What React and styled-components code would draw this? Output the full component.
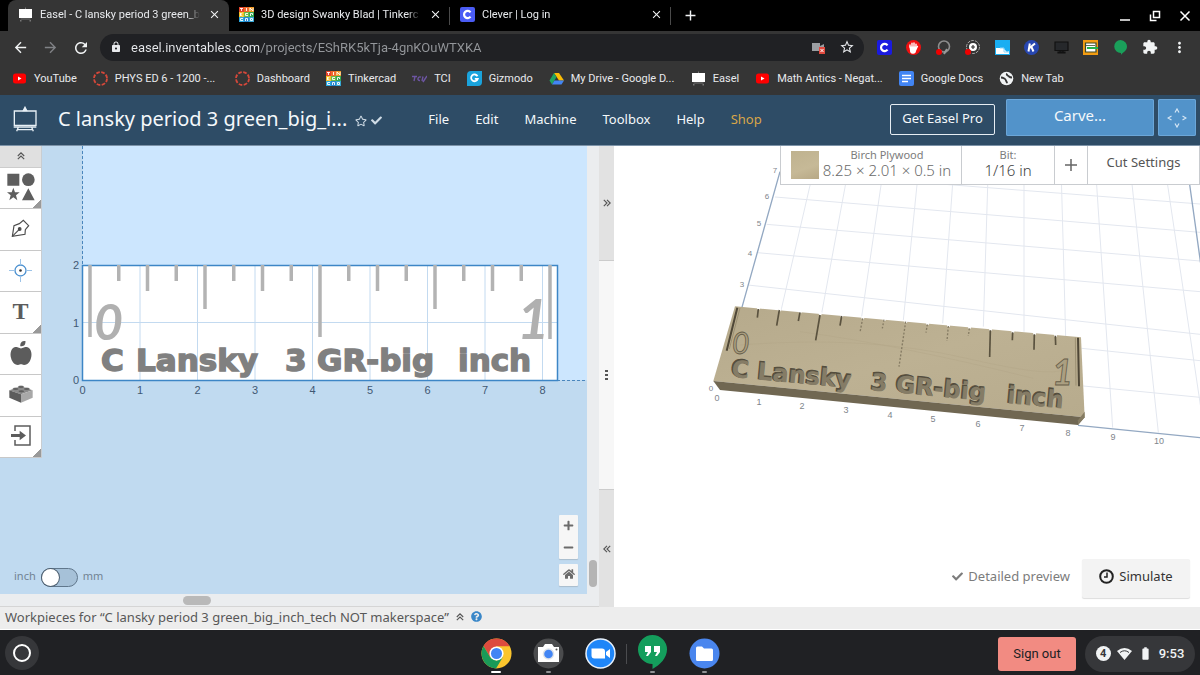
import React, { useState } from 'react';
import styled, { createGlobalStyle } from 'styled-components';
import { FaAppleAlt, FaCheck, FaHome, FaMinus, FaPlus, FaQuestionCircle, FaRegStar } from 'react-icons/fa';
import { MdAdd, MdArrowBack, MdArrowForward, MdBatteryFull, MdClose, MdExtension, MdLock, MdMoreVert, MdRefresh, MdStarBorder } from 'react-icons/md';

const GlobalStyle = createGlobalStyle`
  * { box-sizing: border-box; }
  body {
    margin: 0;
    background: #202124;
    font-family: "Noto Sans", "Open Sans", sans-serif;
    font-size: 13px;
  }
  button, input {
    font: inherit;
    color: inherit;
    border: 0;
    padding: 0;
    margin: 0;
    background: none;
  }
  button { cursor: pointer; }
  a { color: inherit; text-decoration: none; }
`;

const Page = styled.div`
  display: flex;
  flex-direction: column;
  min-height: 100vh;
`;

/* ---------- browser ---------- */

const TabStrip = styled.div`
  display: flex;
  height: 31px;
  padding-left: 8px;
  background: #000;
  color: #e8eaed;
  font: 11px Roboto, sans-serif;
`;

const Tab = styled.div`
  display: flex;
  align-items: center;
  gap: 7px;
  width: 221px;
  padding: 0 7px 2px 10px;
  border-radius: 8px 8px 0 0;
  background: ${(p) => (p.$active ? '#353535' : 'transparent')};
`;

const TabTitle = styled.span`
  flex: 1;
  white-space: nowrap;
  mask-image: linear-gradient(90deg, #000 92%, transparent);
`;

const IconButton = styled.button`
  display: grid;
  place-items: center;
  flex: none;
  width: 16px;
  height: 16px;
  color: ${(p) => (p.$dim ? '#808286' : '#f1f3f4')};
`;

const TabDivider = styled.span`
  align-self: center;
  width: 1px;
  height: 18px;
  margin-left: -1px;
  background: #4a4a4a;
`;

const NewTab = styled(IconButton)`
  align-self: center;
  margin: 0 0 2px 11px;
`;

const WindowControls = styled.div`
  display: flex;
  align-items: center;
  gap: 14px;
  margin-left: auto;
  padding-right: 7px;
`;

const Toolbar = styled.div`
  display: flex;
  align-items: center;
  height: 32px;
  padding: 0 13px 0 12px;
  background: #353535;
`;

const NavButtons = styled.div`
  display: flex;
  gap: 14px;
  margin-right: 12px;
`;

const Omnibox = styled.label`
  display: flex;
  align-items: center;
  flex: 1;
  gap: 9px;
  height: 27px;
  padding: 0 9px 0 10px;
  border-radius: 14px;
  background: #202124;
  color: #e8eaed;
`;

const Address = styled.input`
  flex: 1;
  min-width: 0;
  outline: none;
  font: 13px Roboto, sans-serif;
  color: transparent;
  background: linear-gradient(90deg, #e8eaed 128px, #94979b 128px);
  background-clip: text;
`;

const OmniActions = styled.span`
  display: flex;
  align-items: center;
  gap: 13px;
`;

const Extensions = styled.div`
  display: flex;
  justify-content: space-between;
  width: 311px;
  margin-left: 12px;
`;

const Bookmarks = styled.nav`
  display: flex;
  align-items: center;
  gap: 16px;
  height: 32px;
  padding: 0 12px 2px;
  background: #353535;
  color: #e8eaed;
  font: 11px Roboto, sans-serif;
`;

const Bookmark = styled.a`
  display: flex;
  align-items: center;
  gap: 7px;
  white-space: nowrap;
  span { min-width: ${(p) => (p.$cut ? '104px' : '0')}; }
`;

const Favicon = styled.svg`
  display: block;
  flex: none;
  width: 15px;
  height: 15px;
`;

/* ---------- easel header ---------- */

const Header = styled.header`
  display: flex;
  align-items: center;
  height: 51px;
  padding: 0 4px 3px 13px;
  border-bottom: 1px solid #7d93a8;
  background: #2e4c66;
  color: #f4f8fb;
`;

const ProjectTitle = styled.h1`
  margin: 0 8px 0 21px;
  font-size: 20px;
  font-weight: 400;
  line-height: 28px;
  white-space: nowrap;
`;

const TitleMarks = styled.div`
  display: flex;
  align-items: center;
  gap: 4px;
  padding-top: 4px;
  color: #cfdbe5;
`;

const Menu = styled.nav`
  display: flex;
  gap: 26px;
  margin-left: 46px;
`;

const MenuItem = styled.button`
  line-height: 20px;
  color: ${(p) => (p.$gold ? '#d9a648' : 'inherit')};
`;

const HeaderActions = styled.div`
  display: flex;
  align-items: center;
  gap: 4px;
  margin-left: auto;
`;

const ProButton = styled.button`
  width: 105px;
  height: 31px;
  margin: 2px 7px 0 0;
  border: 1px solid #e6edf3;
  border-radius: 2px;
  padding-bottom: 4px;
  white-space: nowrap;
`;

const CarveButton = styled.button`
  width: 148px;
  height: 37px;
  margin-bottom: 2px;
  padding-bottom: 5px;
  border-radius: 2px;
  background: #5293ca;
  box-shadow: inset 0 0 0 1px #6ba6d8;
  font-size: 15px;
`;

const JogButton = styled(CarveButton)`
  display: grid;
  place-items: center;
  width: 38px;
  padding: 0;
`;

/* ---------- workspace ---------- */

const Workspace = styled.main`
  display: grid;
  grid-template-columns: calc(50% - 1px) 15px minmax(0, 1fr);
  flex: 1;
`;

const DesignPane = styled.section`
  display: grid;
  grid-template-columns: minmax(0, 1fr) 12px;
  grid-template-rows: minmax(0, 1fr) 13px;
  background: #ebedef;
`;

const Layered = styled.div`
  display: grid;
  grid-template: minmax(0, 1fr) / minmax(0, 1fr);
  overflow: hidden;
  background: ${(p) => p.$fill};
  > * { grid-area: 1 / 1; }
`;

const Drawing = styled.svg`
  display: block;
  width: 100%;
  height: 100%;
`;

const ToolPalette = styled.div`
  align-self: start;
  justify-self: start;
  width: 42px;
  border-right: 1px solid #c9cdd1;
  background: #fff;
  color: #5c5c5c;
`;

const CollapseButton = styled.button`
  display: grid;
  place-items: center;
  width: 100%;
  height: 22px;
  padding-bottom: 2px;
  border-bottom: 1px solid #ccc;
  background: #e0e0e0;
`;

const ToolList = styled.div`
  display: grid;
  grid-auto-rows: 1fr;
  height: 290px;
`;

const Tool = styled.button`
  display: grid;
  place-items: center;
  border-bottom: 1px solid #c8c8c8;
  padding-bottom: 2px;
  background: ${(p) => (p.$more ? 'linear-gradient(135deg, transparent 50%, #999 50%) right bottom / 8px 8px no-repeat' : 'none')};
`;

const UnitSwitch = styled.label`
  display: flex;
  align-items: center;
  align-self: end;
  justify-self: start;
  gap: 5px;
  margin: 0 0 7px 14px;
  color: #728393;
  font-size: 11px;
  line-height: 18px;
  span { padding-bottom: 2px; }
`;

const Toggle = styled.input`
  appearance: none;
  display: flex;
  width: 37px;
  height: 19px;
  border: 1px solid #60778c;
  border-radius: 10px;
  background: #a6c1d8;
  &::before {
    content: '';
    width: 17px;
    height: 17px;
    border-radius: 50%;
    background: #fff;
    box-shadow: 0 0 0 1px #4d5f70;
  }
  &:checked { justify-content: flex-end; }
`;

const ZoomControls = styled.div`
  display: flex;
  flex-direction: column;
  align-self: end;
  justify-self: end;
  gap: 5px;
  margin: 0 9px 8px 0;
  color: #6b6b6b;
`;

const ZoomGroup = styled.div`
  display: grid;
  width: 19px;
  border-radius: 1px;
  background: #f6f6f6;
  box-shadow: 0 1px 1px #a9bccb;
`;

const ZoomButton = styled.button`
  display: grid;
  place-items: center;
  height: 22px;
  padding-bottom: 2px;
`;

const VScroll = styled.div`
  display: flex;
  align-items: flex-end;
  justify-content: center;
  padding: 0 1px 7px 0;
  &::after {
    content: '';
    width: 8px;
    height: 27px;
    border-radius: 4px;
    background: #b4b4b4;
  }
`;

const HScroll = styled.div`
  grid-column: 1 / -1;
  padding: 2px 0 0 183px;
  border-bottom: 1px solid #d5d5d5;
  &::after {
    content: '';
    display: block;
    width: 28px;
    height: 9px;
    border-radius: 5px;
    background: #b9b9b9;
  }
`;

const Splitter = styled.div`
  display: grid;
  grid-template-rows: 114fr 230fr 117fr;
  background: #e2e2e2;
  color: #666;
`;

const SplitPart = styled.button`
  display: grid;
  place-items: center;
  background: ${(p) => (p.$handle ? '#f7f7f7' : 'none')};
  border: solid #ccc;
  border-width: ${(p) => (p.$handle ? '1px 0' : '0')};
`;

const CutBar = styled.div`
  display: flex;
  align-self: start;
  justify-self: end;
  height: 39px;
  border: solid #c9ccd0;
  border-width: 0 1px 1px;
  background: #fff;
  color: #555;
`;

const CutCell = styled.button`
  display: flex;
  align-items: center;
  justify-content: center;
  gap: 4px;
  width: ${(p) => p.$width}px;
  border-left: ${(p) => (p.$first ? '0' : '1px solid #c9ccd0')};
  padding-bottom: ${(p) => (p.$raised ? '7px' : '0')};
  white-space: nowrap;
`;

const Swatch = styled.span`
  width: 28px;
  height: 28px;
  margin-bottom: 1px;
  background: linear-gradient(160deg, #bfb28f, #c6b997 60%, #b7a885);
`;

const CellText = styled.span`
  display: grid;
  justify-items: center;
  padding-bottom: 4px;
  font-size: 15px;
  font-weight: 300;
  line-height: 17px;
  color: ${(p) => (p.$soft ? '#6a6a6a' : '#3c3c3c')};
  small {
    font-size: 11px;
    font-weight: 400;
    line-height: 15px;
    color: #7c7c7c;
  }
`;

const PreviewActions = styled.div`
  display: flex;
  align-self: end;
  justify-self: end;
  gap: 12px;
  margin: 0 10px 9px;
`;

const PreviewToggle = styled.button`
  display: flex;
  align-items: center;
  gap: 5px;
  padding-bottom: 5px;
  color: #7c7c7c;
`;

const SimulateButton = styled.button`
  display: flex;
  align-items: center;
  justify-content: center;
  gap: 5px;
  width: 108px;
  height: 39px;
  padding-bottom: 5px;
  border-radius: 2px;
  background: #f3f3f3;
  box-shadow: 0 1px 1px #ddd;
  color: #333;
`;

const WorkpieceBar = styled.footer`
  display: flex;
  align-items: center;
  gap: 7px;
  height: 23px;
  padding: 0 5px 3px;
  border-bottom: 1px solid #fff;
  background: #ededed;
  color: #585858;
  button { display: grid; }
`;

/* ---------- shelf ---------- */

const Shelf = styled.div`
  display: grid;
  grid-template-columns: 1fr auto 1fr;
  align-items: center;
  height: 45px;
  padding: 0 5px;
  background: #202124;
`;

const Launcher = styled.button`
  display: grid;
  place-items: center;
  width: 34px;
  height: 34px;
  border-radius: 50%;
  background: #36373a;
  &::after {
    content: '';
    width: 14px;
    height: 14px;
    border: 2px solid #fff;
    border-radius: 50%;
  }
`;

const ShelfApps = styled.div`
  display: flex;
  align-items: flex-end;
  align-self: end;
  gap: 21px;
  padding-bottom: 2px;
`;

const ShelfApp = styled.button`
  display: flex;
  flex-direction: column;
  align-items: center;
  gap: 2px;
  &::after {
    content: '';
    width: ${(p) => (p.$active ? '10px' : '5px')};
    height: 2px;
    border-radius: 1px;
    background: ${(p) => (p.$active ? '#fff' : p.$running ? '#909193' : 'transparent')};
  }
`;

const ShelfDivider = styled.span`
  width: 1px;
  height: 20px;
  margin: 0 -11px 9px;
  background: #4b4c4f;
`;

const ShelfStatus = styled.div`
  display: flex;
  justify-content: flex-end;
  align-items: center;
  gap: 9px;
  padding-top: 2px;
  font: 13px Roboto, sans-serif;
`;

const SignOut = styled.button`
  width: 78px;
  height: 34px;
  border-radius: 3px;
  background: #f28b82;
  color: #202124;
`;

const Tray = styled.button`
  display: flex;
  align-items: center;
  justify-content: center;
  gap: 6px;
  width: 110px;
  height: 36px;
  border-radius: 18px;
  background: #36373a;
  color: #f1f3f4;
  font-weight: 500;
`;

const Badge = styled.span`
  width: 15px;
  height: 15px;
  border-radius: 50%;
  background: #f1f3f4;
  color: #36373a;
  font-size: 11px;
  font-weight: 700;
  line-height: 15px;
  text-align: center;
`;

/* ---------- favicons ---------- */

const EaselMark = () => (
  <Favicon viewBox="0 0 15 15">
    <path d="M1 2h13v9H1z" fill="#fff" />
    <path d="M7 .5h1V2H7zM2.5 11.5h10v1h-10zM2 13h1.5v1.5H2zM11.500 13H13v1.500h-1.500z" fill="#777" />
  </Favicon>
);

const tinkerTiles = ['#e3442b', '#ee6a2c', '#f39a25', '#f5c027', '#6dbb45', '#35a853', '#2aa7df', '#2787d0', '#35a5d4'];
// one white mark for every tile
const tinkerMarks = ['M1 1.500h3M2.500 1.500v2.500', 'M2.500 1v3', 'M1 4V1l3 3V1', 'M1.500 1v3M3.500 1L1.500 2.500L3.500 4', 'M4 1.500H1.500v2H4', 'M1.500 4V1.500h2V3', 'M4 1.500H1.500v2H4', 'M1.500 4V1.500h2V4', 'M1.500 1.500h2v2h-2z'];
const TinkerMark = () => (
  <Favicon viewBox="0 0 15 15">
    {tinkerTiles.map((fill, i) => (
      <g key={i} transform={`translate(${(i % 3) * 5} ${Math.floor(i / 3) * 5})`}>
        <rect width="5" height="5" fill={fill} />
        <path d={tinkerMarks[i]} fill="none" stroke="#fff" strokeWidth="0.900" />
      </g>
    ))}
  </Favicon>
);

const YouTubeMark = () => (
  <Favicon viewBox="0 0 15 15">
    <rect x="1" y="2.500" width="13" height="10" rx="2.500" fill="#f00" />
    <path d="M6 5.500v4l3.500-2z" fill="#fff" />
  </Favicon>
);

const CanvasMark = () => (
  <Favicon viewBox="0 0 15 15">
    <circle cx="7.500" cy="7.500" r="6.500" fill="none" stroke="#d5483a" strokeWidth="1.800" strokeDasharray="3.600 1.500" />
  </Favicon>
);

const CleverMark = ({ from = '#4a5cf5' }) => (
  <Favicon viewBox="0 0 15 15">
    <rect width="15" height="15" rx="2" fill={from} />
    <path d="M10.500 5.300A3.600 3.600 0 1 0 10.500 9.700" fill="none" stroke="#fff" strokeWidth="2.200" />
  </Favicon>
);

const TciMark = () => (
  <Favicon viewBox="0 0 15 15">
    <path d="M0 5.500h5M3 5.500L2 10M9 6.200C6 4.500 4.500 9.800 8 9.500M11 5.500l-1 4.500M15 5L11 11" fill="none" stroke="#6d55a3" strokeWidth="1.400" />
  </Favicon>
);

const GizmodoMark = () => (
  <Favicon viewBox="0 0 15 15">
    <path d="M4 0h11v11a4 4 0 0 1-4 4H0V4a4 4 0 0 1 4-4z" fill="#1aa3dc" />
    <path d="M10.500 5.200A3.400 3.400 0 1 0 10.800 7.800H7.800" fill="none" stroke="#fff" strokeWidth="1.800" />
  </Favicon>
);

const DriveMark = () => (
  <Favicon viewBox="0 0 15 15">
    <path d="M5 2h5l5 7.500h-5z" fill="#fbbc04" />
    <path d="M5 2l2.500 4L3 13.500L.5 9.500z" fill="#1fa463" />
    <path d="M5.500 9.500H15l-2.500 4H3z" fill="#4285f4" />
  </Favicon>
);

const DocsMark = () => (
  <Favicon viewBox="0 0 15 15">
    <rect width="15" height="15" rx="2" fill="#4285f4" />
    <path d="M3 4.500h9M3 7.500h9M3 10.500h6" stroke="#fff" strokeWidth="1.500" />
  </Favicon>
);

const GlobeMark = () => (
  <Favicon viewBox="0 0 15 15">
    <circle cx="7.500" cy="7.500" r="6.800" fill="#f1f3f4" />
    <path d="M2 6.500c2 0 3 1 4 1.500s1 3 2.500 4M8 2.500c-1 2 1 2 2 3s1.500 1 3 1" fill="none" stroke="#353535" strokeWidth="1.800" />
  </Favicon>
);

const tabs = [
  { title: 'Easel - C lansky period 3 green_b', icon: <EaselMark />, active: true },
  { title: '3D design Swanky Blad | Tinkerc', icon: <TinkerMark /> },
  { title: 'Clever | Log in', icon: <CleverMark /> },
];

const bookmarks = [
  { label: 'YouTube', icon: <YouTubeMark /> },
  { label: 'PHYS ED 6 - 1200 -...', icon: <CanvasMark />, cut: true },
  { label: 'Dashboard', icon: <CanvasMark /> },
  { label: 'Tinkercad', icon: <TinkerMark /> },
  { label: 'TCI', icon: <TciMark /> },
  { label: 'Gizmodo', icon: <GizmodoMark /> },
  { label: 'My Drive - Google D...', icon: <DriveMark />, cut: true },
  { label: 'Easel', icon: <EaselMark /> },
  { label: 'Math Antics - Negat...', icon: <YouTubeMark />, cut: true },
  { label: 'Google Docs', icon: <DocsMark /> },
  { label: 'New Tab', icon: <GlobeMark /> },
];

const extensions = [
  { name: 'Clever', icon: <CleverMark from="#1a1ae0" /> },
  {
    name: 'Blocker',
    icon: (
      <Favicon viewBox="0 0 15 15">
        <circle cx="7.500" cy="7.500" r="7.500" fill="#f01010" />
        <path d="M4 7V5M6 7V3.200M8 7V3M10 8V4.200" stroke="#fff" strokeWidth="1.400" strokeLinecap="round" />
        <path d="M3.400 6.500h7.200l1-1 .6.800L10 11a3 3 0 0 1-6-.5z" fill="#fff" />
      </Favicon>
    ),
  },
  {
    name: 'Recorder',
    icon: (
      <Favicon viewBox="0 0 15 15">
        <circle cx="8" cy="6.500" r="5.500" fill="none" stroke="#8d8d8d" strokeWidth="1.600" />
        <path d="M8 14l3-5" stroke="#999" strokeWidth="2" />
        <circle cx="3" cy="12" r="3" fill="#f00000" />
      </Favicon>
    ),
  },
  {
    name: 'Target',
    icon: (
      <Favicon viewBox="0 0 15 15">
        <circle cx="8" cy="7" r="6.500" fill="none" stroke="#aaa" strokeWidth="1" strokeDasharray="3 1" />
        <circle cx="8" cy="7" r="4" fill="#fff" />
        <path d="M8 5v4M6 7h4" stroke="#353535" strokeWidth="1.200" />
        <circle cx="3" cy="12" r="3" fill="#f00000" />
      </Favicon>
    ),
  },
  {
    name: 'Window',
    icon: (
      <Favicon viewBox="0 0 15 15">
        <path d="M0 0h15v15H0z" fill="#19aef2" />
        <path d="M1 8h7l4 4 2-1v3H1z" fill="#fff" />
        <path d="M5 8h4v4h5" fill="none" stroke="#8fd5f7" />
      </Favicon>
    ),
  },
  {
    name: 'Kami',
    icon: (
      <Favicon viewBox="0 0 15 15">
        <circle cx="7.500" cy="7.500" r="7.500" fill="#2746b0" />
        <path d="M5.800 3.500L4.500 11.500M11 3.500L5.500 8M7.200 6.500L9.500 11.500" stroke="#fff" strokeWidth="2" />
      </Favicon>
    ),
  },
  {
    name: 'Display',
    icon: (
      <Favicon viewBox="0 0 15 15">
        <path d="M1 2h13v8.500H1zM6 10.500h3V12H6zM4 12h7v1H4z" fill="#26282b" stroke="#111" strokeWidth="1.200" />
      </Favicon>
    ),
  },
  {
    name: 'Books',
    icon: (
      <Favicon viewBox="0 0 15 15">
        <path d="M0 0h15v15H0z" fill="#f39c12" />
        <path d="M2.500 3h10.500v9H2.500z" fill="#fff" stroke="#3d4a2a" strokeWidth="1.200" />
        <path d="M3 5.500h9" stroke="#3d4a2a" strokeWidth="0.800" />
        <path d="M4 8h11" stroke="#23b34a" strokeWidth="2" />
      </Favicon>
    ),
  },
  {
    name: 'Hangouts',
    icon: (
      <Favicon viewBox="0 0 15 15">
        <path d="M7.500 0a6.500 6.500 0 0 1 6.300 8C13 11.500 9 13 8 15v-2A6.500 6.500 0 0 1 7.500 0z" fill="#1a9f5a" />
      </Favicon>
    ),
  },
  { name: 'Extensions', icon: <MdExtension size={16} /> },
  { name: 'More', icon: <MdMoreVert size={17} /> },
];

/* ---------- tool icons ---------- */

const chevrons = {
  up: 'M1 5L5 1L9 5M1 9L5 5L9 9',
  left: 'M5 1L1 5L5 9M9 1L5 5L9 9',
  right: 'M5 1L9 5L5 9M1 1L5 5L1 9',
};
const Chevrons = ({ to }) => (
  <svg width="8" height="8" viewBox="0 0 10 10" fill="none" stroke="#555" strokeWidth="1.400">
    <path d={chevrons[to]} />
  </svg>
);

const ShapesIcon = () => (
  <svg width="28" height="28" viewBox="0 0 84 84" fill="#5e5e5e">
    <path d="M1 2h36v36H1zM64 46l19 36H45z" />
    <circle cx="64" cy="20" r="19" />
    <path d="M19 44l5 14h14L27 67l4 15-12-9-12 9 4-15L0 58h14z" />
  </svg>
);

const PenIcon = () => (
  <svg width="19" height="19" viewBox="0 0 57 57" fill="none" stroke="#4c4c4c" strokeWidth="3.500">
    <path d="M4 52L9 20L25 14L37 4L53 20L43 32L42 46z" />
    <path d="M4 52L24 32" />
    <circle cx="26" cy="30" r="4" fill="#4c4c4c" />
  </svg>
);

const DrillIcon = () => (
  <svg width="23" height="23" viewBox="0 0 23 23" fill="none" stroke="#4a90d0">
    <circle cx="11.500" cy="11.500" r="5.500" strokeWidth="1.300" />
    <path d="M11.500 0v6M11.500 17v6M0 11.500h6M17 11.500h6" stroke="#9cc3e8" />
    <circle cx="11.500" cy="11.500" r="1.300" fill="#333" stroke="none" />
  </svg>
);

const Letter = styled.span`
  font: 700 24px "Liberation Serif", serif;
`;

const BrickIcon = () => (
  <svg width="24" height="18" viewBox="0 0 72 54">
    <path d="M1 16L36 4L71 16L36 28z" fill="#8a8a8a" />
    <path d="M1 16L36 28V53L1 38z" fill="#5c5c5c" />
    <path d="M71 16L36 28V53L71 38z" fill="#a8a8a8" />
    <g fill="#5e5e5e" stroke="#a0a0a0" strokeWidth="1">
      <ellipse cx="36" cy="6" rx="9" ry="4" />
      <ellipse cx="20" cy="12" rx="9" ry="4" />
      <ellipse cx="53" cy="12" rx="9" ry="4" />
      <ellipse cx="37" cy="19" rx="9" ry="4" />
    </g>
  </svg>
);

const ImportIcon = () => (
  <svg width="20" height="21" viewBox="0 0 60 63">
    <path d="M12 18V3H57V60H12V45" fill="none" stroke="#5c5c5c" strokeWidth="4.500" />
    <path d="M0 27h26V17l19 14.500L26 46V36H0z" fill="#5c5c5c" />
  </svg>
);

const tools = [
  { name: 'Shapes', icon: <ShapesIcon />, more: true },
  { name: 'Pen', icon: <PenIcon /> },
  { name: 'Drill', icon: <DrillIcon /> },
  { name: 'Text', icon: <Letter>T</Letter>, more: true },
  { name: 'Icons', icon: <FaAppleAlt size={24} /> },
  { name: 'Apps', icon: <BrickIcon /> },
  { name: 'Import', icon: <ImportIcon />, more: true },
];

/* ---------- drawings ---------- */

// bottom end of each ruler mark
const marks = [191, 135, 145, 135, 163, 135, 145, 135, 191, 135, 145, 135, 163, 135, 145, 135, 193];
const UNIT = 57.5;

const RulerText = styled.text`
  font: 700 ${(p) => p.$size}px "DejaVu Sans", sans-serif;
`;

const RulerDigit = styled.text`
  font: italic ${(p) => p.$weight} ${(p) => p.$size}px Lato, sans-serif;
`;

const AxisText = styled.text`
  font: ${(p) => p.$size}px "Liberation Sans", Arial, sans-serif;
  text-anchor: ${(p) => p.$anchor || 'middle'};
`;

// the words of the ruler name, each at its own x
const rulerWords = [['C', 101, 0], ['Lansky', 136, 26], ['3', 285, 140], ['GR-big', 317, 165], ['inch', 458, 277]];

const FlatRuler = () => (
  <Drawing>
    <path d="M83 0H4000V234H83z" fill="#cce6fe" />
    <path d="M83 119H557V234H83z" fill="#fff" />
    {[1, 2, 3, 4, 5, 6, 7, 8].map((n) => (
      <path key={n} d={`M${82.5 + n * UNIT} 120V234`} stroke="#c3daf0" />
    ))}
    <path d="M83 176.500H557" stroke="#c3daf0" />
    <path d="M82.500 0V119M557 234.500H4000" fill="none" stroke="#4a86bd" strokeDasharray="3 2" />
    <path d="M82.500 119.500H557.500V234.500H82.500z" fill="none" stroke="#3d86c6" strokeWidth="1.500" />
    {marks.map((end, i) => (
      <path key={i} d={`M${90 + i * 28.75} 119V${end}`} stroke="#b3b3b3" strokeWidth="3.500" />
    ))}
    <g fill="#b0b0b0">
      <RulerDigit $size={50} $weight={700} x="94" y="194">0</RulerDigit>
      <RulerDigit $size={56} $weight={700} x="517" y="193">1</RulerDigit>
    </g>
    <RulerText $size={31} y="225" fill="#808080" stroke="#808080" strokeWidth="1.500">
      {rulerWords.map(([word, x]) => <tspan key={word} x={x}>{`${word} `}</tspan>)}
    </RulerText>
    <g fill="#3f5873">
      {[0, 1, 2].map((n) => (
        <AxisText key={n} $size={11} $anchor="end" x="79" y={238 - n * UNIT}>{n}</AxisText>
      ))}
      {[0, 1, 2, 3, 4, 5, 6, 7, 8].map((n) => (
        <AxisText key={n} $size={11} x={82.5 + n * UNIT} y="248">{n}</AxisText>
      ))}
    </g>
  </Drawing>
);

const bedLines = [
  'M335 100L243 497', 'M440 100L365 505', 'M552 60L485 515', 'M657 60L610 525', 'M762 60L728 535', 'M865 60L850 545',
  'M972 60L972 560', 'M1083 60L1097 575', 'M1186 60L1238 848', 'M1290 60L1375 862', 'M1394 60L1516 880',
  'M240 80L1500 177', 'M225 156L1500 262', 'M200 238L1500 348', 'M172 323L1500 440', 'M143 420L1500 568',
  'M1145 610L1500 647', 'M1150 723L1500 757',
];

const grooves = [
  'M175 492L172 518', 'M238 495L230 542', 'M300 502L295 528', 'M360 510L347 586', 'M425 513L420 542',
  'M871 556L869 636', 'M938 562L937 586', 'M1003 568L1002 614', 'M1066 572L1067 600',
];
const faintGrooves = ['M488 520L480 562', 'M552 524L547 550', 'M617 530L597 665', 'M682 538L678 563', 'M745 543L741 588', 'M808 550L805 573'];
const notches = [[175, 489], [238, 494], [300, 500], [360, 506], [425, 512], [488, 518], [552, 523], [617, 529], [682, 535], [745, 541], [808, 546], [871, 552], [938, 559], [1003, 565], [1066, 571]];

const bedNumbers = [[717, 401], [759, 405], [802, 409], [846, 413], [890, 418], [933, 422], [978, 427], [1022, 431], [1068, 436], [1113, 440], [1159, 444]];
const sideNumbers = [[3, 742, 287], [4, 750, 256], [5, 759, 226], [6, 767, 199], [7, 775, 173], [0, 711, 391]];

const SolidRuler = () => (
  <Drawing>
    <defs>
      <linearGradient id="wood" x1="0" x2="1" y1="0" y2="1">
        <stop offset="0" stopColor="#b6aa8c" />
        <stop offset="0.5" stopColor="#bdb193" />
        <stop offset="1" stopColor="#b7ab8d" />
      </linearGradient>
    </defs>
    <g transform="translate(86 -1) scale(0.333333)" fill="none">
      <g stroke="#e3e7ef" strokeWidth="3">
        {bedLines.map((d) => <path key={d} d={d} />)}
      </g>
      <path d="M240 80L125 490M1465 90L1511 420M1134 841L1520 880" stroke="#93a8c2" strokeWidth="4" />
      <path d="M105 484L1143 577L1154 817L40 708z" fill="url(#wood)" />
      <path d="M40 708L1154 817L1134 840L60 735z" fill="#706752" />
      <path d="M1154 800V817L1134 840V826z" fill="#857b62" />
      <path d="M120 600Q500 570 800 640T1100 660M300 560Q600 600 1000 700" stroke="#b0a486" strokeWidth="3" opacity="0.400" />
      {notches.map(([x, y]) => <path key={x} d={`M${x - 4} ${y - 4}h10l-2 9h-7z`} fill="#fff" />)}
      <g stroke="#5a523f" strokeWidth="5">
        {grooves.map((d) => <path key={d} d={d} />)}
      </g>
      <g stroke="#857b63" strokeWidth="4" strokeDasharray="6 5">
        {faintGrooves.map((d) => <path key={d} d={d} />)}
      </g>
      <path d="M112 488L80 617M1134 578L1137 724" stroke="#4f4737" strokeWidth="6" />
      <path d="M120 489L88 612M1126 578L1128 722" stroke="#9c9072" strokeWidth="3" />
    </g>
    <g transform="translate(116 230) rotate(5.400)">
      <RulerText $size={24} y="0" fill="#544d3d" stroke="#544d3d">
        {rulerWords.map(([word, , x]) => <tspan key={word} x={x}>{`${word} `}</tspan>)}
      </RulerText>
      <RulerText $size={24} y="1" fill="#857c66" aria-hidden="true">
        {rulerWords.map(([word, , x]) => <tspan key={word} x={x + 1}>{`${word} `}</tspan>)}
      </RulerText>
    </g>
    <g fill="#ab9f81" stroke="#665d49" strokeWidth="0.800">
      <RulerDigit $size={30} $weight={400} x="118" y="208">0</RulerDigit>
      <RulerDigit $size={36} $weight={700} x="438" y="239">1</RulerDigit>
    </g>
    <g fill="#80858c" transform="translate(-614 -146)">
      {bedNumbers.map(([x, y], n) => <AxisText key={n} $size={9} x={x} y={y}>{n}</AxisText>)}
      {sideNumbers.map(([n, x, y]) => <AxisText key={n} $size={8} x={x} y={y}>{n}</AxisText>)}
    </g>
  </Drawing>
);

const EaselLogo = () => (
  <svg width="24" height="26" viewBox="0 0 72 78" fill="none" stroke="#e8f0f6" strokeWidth="4">
    <path d="M4 15H69V58H4zM2 63H70M16 64L11 76M56 64L61 76M13 71H59" />
    <path d="M31 14L36 4L41 14z" fill="#e8f0f6" />
  </svg>
);

const ChromeApp = () => (
  <svg width="31" height="31" viewBox="0 0 32 32">
    <circle cx="16" cy="16" r="15.500" fill="#fbc52d" />
    <path d="M2.600 8.300A15.500 15.500 0 0 1 29.500 8.500H16L9.500 19.800z" fill="#dd4b3e" />
    <path d="M2.600 8.300L9.500 19.800L16 23.500L22.500 19.800L15.500 31.500A15.500 15.500 0 0 1 2.600 8.300z" fill="#1a9a58" />
    <circle cx="16" cy="16" r="7.300" fill="#fff" />
    <circle cx="16" cy="16" r="5.700" fill="#4285f4" />
  </svg>
);

const CameraApp = () => (
  <svg width="31" height="31" viewBox="0 0 31 31">
    <circle cx="15.500" cy="15.500" r="15" fill="#4b4c4e" />
    <path d="M5 9h5l2-3h7l2 3h5v15H5z" fill="#fff" />
    <circle cx="15.500" cy="16" r="5.800" fill="#dfe3e8" />
    <circle cx="15.500" cy="16" r="4.300" fill="#4285f4" />
    <circle cx="23.500" cy="11.500" r="1" fill="#555" />
  </svg>
);

const ZoomApp = () => (
  <svg width="31" height="31" viewBox="0 0 31 31">
    <circle cx="15.500" cy="15.500" r="14.500" fill="#1f86f8" stroke="#e8f1fb" strokeWidth="1.500" />
    <path d="M6.500 10.500H17a3 3 0 0 1 3 3v7H9.500a3 3 0 0 1-3-3zM21 14l4-3v9l-4-3z" fill="#fff" />
  </svg>
);

const HangoutsApp = () => (
  <svg width="31" height="34" viewBox="0 0 31 34">
    <path d="M15.500 0a14.500 14.500 0 0 1 14.500 14.500C30 23 23 30 15.500 34v-5A14.500 14.500 0 0 1 15.500 0z" fill="#149e5c" />
    <path d="M8 11h6v6l-3 4H9l2-4H8zM17 11h6v6l-3 4h-2l2-4h-3z" fill="#fff" />
  </svg>
);

const FilesApp = () => (
  <svg width="31" height="31" viewBox="0 0 31 31">
    <circle cx="15.500" cy="15.500" r="15" fill="#4a86ee" />
    <path d="M7 10a1.500 1.500 0 0 1 1.500-1.500H13l2 2h7.500A1.500 1.500 0 0 1 24 12v9.500a1.500 1.500 0 0 1-1.500 1.500h-14A1.500 1.500 0 0 1 7 21.500z" fill="#fff" />
  </svg>
);

function App() {
  const [metric, setMetric] = useState(false);
  const [url, setUrl] = useState('easel.inventables.com/projects/EShRK5kTja-4gnKOuWTXKA');

  return (
    <Page>
      <GlobalStyle />
      <TabStrip>
        {tabs.map((tab, i) => (
          <React.Fragment key={tab.title}>
            <Tab $active={tab.active}>
              {tab.icon}
              <TabTitle>{tab.title}</TabTitle>
              <IconButton aria-label="Close tab"><MdClose size={13} /></IconButton>
            </Tab>
            {i > 0 && <TabDivider />}
          </React.Fragment>
        ))}
        <NewTab aria-label="New tab"><MdAdd size={17} /></NewTab>
        <WindowControls>
          <IconButton aria-label="Minimize">
            <svg width="12" height="12" stroke="#fff" strokeWidth="1.500"><path d="M1 10h10" /></svg>
          </IconButton>
          <IconButton aria-label="Restore">
            <svg width="12" height="12" fill="none" stroke="#fff" strokeWidth="1.500"><path d="M4.500 1.500h6v6h-6zM1.500 4.500v6h6" /></svg>
          </IconButton>
          <IconButton aria-label="Close window">
            <svg width="12" height="12" stroke="#fff" strokeWidth="1.500"><path d="M1.500 1.500l9 9M10.500 1.500l-9 9" /></svg>
          </IconButton>
        </WindowControls>
      </TabStrip>

      <Toolbar>
        <NavButtons>
          <IconButton aria-label="Back"><MdArrowBack size={17} /></IconButton>
          <IconButton aria-label="Forward" $dim><MdArrowForward size={17} /></IconButton>
          <IconButton aria-label="Reload"><MdRefresh size={18} /></IconButton>
        </NavButtons>
        <Omnibox>
          <MdLock size={12} />
          <Address aria-label="Address" value={url} onChange={(e) => setUrl(e.target.value)} />
          <OmniActions>
            <Favicon viewBox="0 0 15 15">
              <path d="M1 3h8v3l4-2v7H1z" fill="#9b9ea2" />
              <path d="M8 7h6v7H8z" fill="#e04a3f" />
              <path d="M9.500 9l3 3M12.500 9l-3 3" stroke="#fff" />
            </Favicon>
            <MdStarBorder size={16} />
          </OmniActions>
        </Omnibox>
        <Extensions>
          {extensions.map((ext) => (
            <IconButton key={ext.name} aria-label={ext.name}>{ext.icon}</IconButton>
          ))}
        </Extensions>
      </Toolbar>

      <Bookmarks>
        {bookmarks.map((b) => (
          <Bookmark key={b.label} href="#" $cut={b.cut}>
            {b.icon}
            <span>{b.label}</span>
          </Bookmark>
        ))}
      </Bookmarks>

      <Header>
        <EaselLogo />
        <ProjectTitle>C lansky period 3 green_big_i...</ProjectTitle>
        <TitleMarks>
          <FaRegStar size={12} />
          <FaCheck size={11} />
        </TitleMarks>
        <Menu>
          {['File', 'Edit', 'Machine', 'Toolbox', 'Help', 'Shop'].map((item) => (
            <MenuItem key={item} $gold={item === 'Shop'}>{item}</MenuItem>
          ))}
        </Menu>
        <HeaderActions>
          <ProButton>Get Easel Pro</ProButton>
          <CarveButton>Carve...</CarveButton>
          <JogButton aria-label="Jog machine">
            <svg width="20" height="20" fill="none" stroke="#d5e6f5" strokeWidth="1.200">
              <path d="M8 4.500L10 1L12 4.500M8 15.500L10 19L12 15.500M4.500 8L1 10L4.500 12M15.500 8L19 10L15.500 12" />
            </svg>
          </JogButton>
        </HeaderActions>
      </Header>

      <Workspace>
        <DesignPane>
          <Layered $fill="#c0daf0">
            <FlatRuler />
            <ToolPalette>
              <CollapseButton aria-label="Collapse tools"><Chevrons to="up" /></CollapseButton>
              <ToolList>
                {tools.map((tool) => (
                  <Tool key={tool.name} aria-label={tool.name} $more={tool.more}>{tool.icon}</Tool>
                ))}
              </ToolList>
            </ToolPalette>
            <UnitSwitch>
              <span>inch</span>
              <Toggle type="checkbox" checked={metric} onChange={() => setMetric(!metric)} />
              <span>mm</span>
            </UnitSwitch>
            <ZoomControls>
              <ZoomGroup>
                <ZoomButton aria-label="Zoom in"><FaPlus size={11} /></ZoomButton>
                <ZoomButton aria-label="Zoom out"><FaMinus size={11} /></ZoomButton>
              </ZoomGroup>
              <ZoomGroup>
                <ZoomButton aria-label="Home"><FaHome size={12} /></ZoomButton>
              </ZoomGroup>
            </ZoomControls>
          </Layered>
          <VScroll />
          <HScroll />
        </DesignPane>

        <Splitter>
          <SplitPart aria-label="Expand design"><Chevrons to="right" /></SplitPart>
          <SplitPart aria-label="Resize" $handle>
            <svg width="4" height="12" fill="#555">
              <path d="M0 1h3v2H0zM0 5h3v2H0zM0 9h3v2H0z" />
            </svg>
          </SplitPart>
          <SplitPart aria-label="Expand preview"><Chevrons to="left" /></SplitPart>
        </Splitter>

        <Layered $fill="#fff">
          <SolidRuler />
          <CutBar>
            <CutCell $width={180} $first>
              <Swatch />
              <CellText $soft>
                <small>Birch Plywood</small>
                8.25 × 2.01 × 0.5 in
              </CellText>
            </CutCell>
            <CutCell $width={93}>
              <CellText>
                <small>Bit:</small>
                1/16 in
              </CellText>
            </CutCell>
            <CutCell $width={33} aria-label="Add bit">
              <svg width="12" height="12" stroke="#666" strokeWidth="1.500"><path d="M6 0v12M0 6h12" /></svg>
            </CutCell>
            <CutCell $width={112} $raised>Cut Settings</CutCell>
          </CutBar>
          <PreviewActions>
            <PreviewToggle><FaCheck size={11} />Detailed preview</PreviewToggle>
            <SimulateButton>
              <svg width="15" height="15" fill="none" stroke="#222" strokeWidth="2">
                <circle cx="7.500" cy="7.500" r="6.300" />
                <path d="M8 3.500v4.500H5" strokeWidth="1.500" />
              </svg>
              Simulate
            </SimulateButton>
          </PreviewActions>
        </Layered>
      </Workspace>

      <WorkpieceBar>
        <span>Workpieces for “C lansky period 3 green_big_inch_tech NOT makerspace”</span>
        <button aria-label="Show workpieces"><Chevrons to="up" /></button>
        <button aria-label="Help"><FaQuestionCircle size={11} color="#3a87c8" /></button>
      </WorkpieceBar>

      <Shelf>
        <Launcher aria-label="Launcher" />
        <ShelfApps>
          <ShelfApp aria-label="Chrome" $active><ChromeApp /></ShelfApp>
          <ShelfApp aria-label="Camera" $running><CameraApp /></ShelfApp>
          <ShelfApp aria-label="Zoom"><ZoomApp /></ShelfApp>
          <ShelfDivider />
          <ShelfApp aria-label="Hangouts" $running><HangoutsApp /></ShelfApp>
          <ShelfApp aria-label="Files" $running><FilesApp /></ShelfApp>
        </ShelfApps>
        <ShelfStatus>
          <SignOut>Sign out</SignOut>
          <Tray>
            <Badge>4</Badge>
            <svg width="15" height="13" fill="none">
              <path d="M0 4Q7.500 -2 15 4L7.500 13z" fill="#f1f3f4" />
              <path d="M3 5.500Q7.500 2 12 5.500" stroke="#36373a" />
            </svg>
            <MdBatteryFull size={15} />
            <span>9:53</span>
          </Tray>
        </ShelfStatus>
      </Shelf>
    </Page>
  );
}

export default App;
